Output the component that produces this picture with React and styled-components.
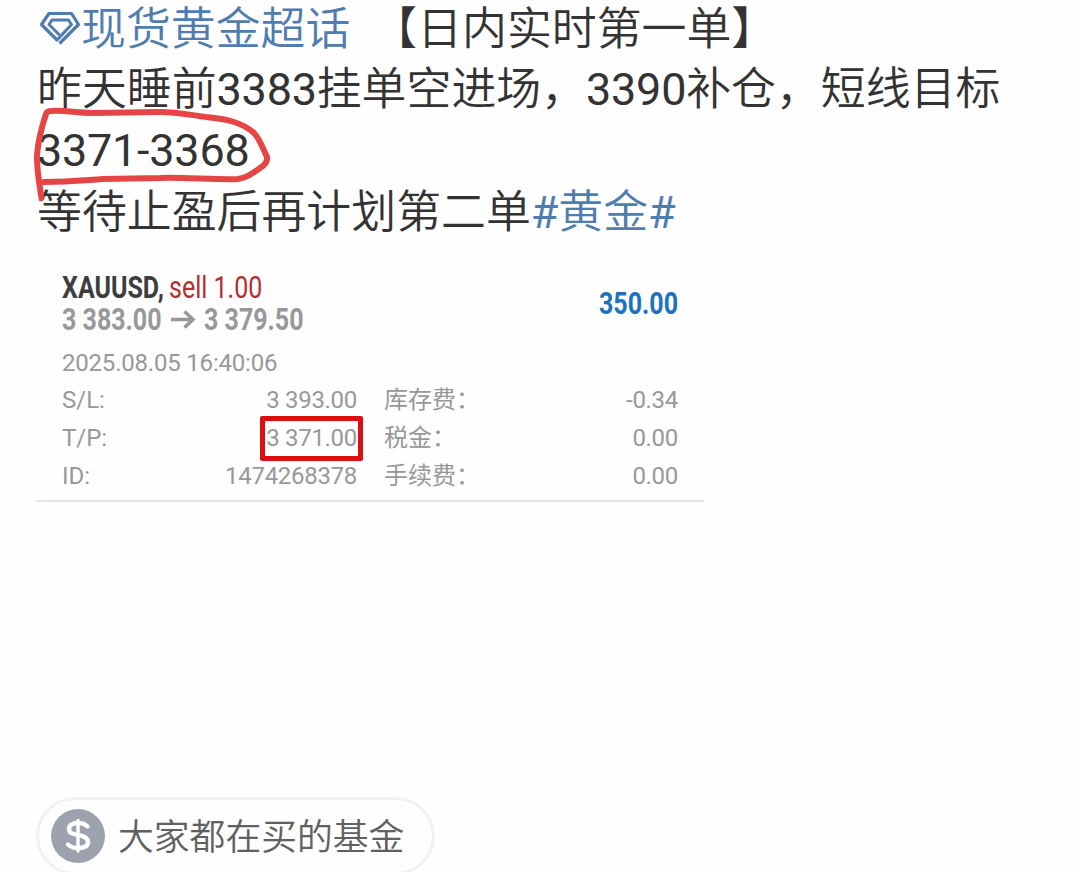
import React from 'react'
import styled, { createGlobalStyle } from 'styled-components'

const GlobalStyle = createGlobalStyle`
  body {
    margin: 0;
    background: #fefefe;
    overflow: hidden;
  }
`

const Page = styled.main`
  display: flex;
  flex-direction: column;
  box-sizing: border-box;
  width: 1080px;
  height: 872px;
  padding-left: 36px;
  overflow: hidden;
  font-family: Roboto, "Noto Sans CJK SC", sans-serif;
`

const Post = styled.div`
  position: relative;
  flex-shrink: 0;
  height: 264px;
  padding-left: 1px;
  box-sizing: border-box;
  color: #333;
  font-size: 44.9px;
  font-weight: 350;
`

const Line = styled.p`
  height: 61.3px;
  margin: 0;
  line-height: 61.3px;
  white-space: pre;
  &:first-child {
    height: 59px;
    line-height: 59px;
  }
`

const Num = styled.span`
  font-weight: 400;
  letter-spacing: -0.2px;
`

const Topic = styled.a`
  color: #507daf;
`

const Diamond = styled.svg`
  width: 44px;
  height: 45px;
  vertical-align: -6px;
`

const Scribble = styled.svg`
  position: absolute;
  left: -6px;
  top: 100px;
  width: 250px;
  height: 110px;
`

const Order = styled.section`
  flex-shrink: 0;
  box-sizing: border-box;
  width: 668px;
  height: 238px;
  padding: 8px 26px 0;
  border-bottom: 2px solid #e8e4e5;
  color: #98989a;
`

const OrderHead = styled.div`
  display: flex;
  justify-content: space-between;
  align-items: center;
  height: 64px;
`

const HeadLine = styled.div`
  display: flex;
  align-items: center;
  height: 32px;
`

const Condensed = styled.span`
  display: block;
  width: ${({ $width }) => $width}px;
  font-size: 30.5px;
  line-height: 32px;
  font-weight: ${({ $weight }) => $weight || 700};
  color: ${({ $color }) => $color};
  white-space: pre;
  transform: scaleX(0.82);
  transform-origin: left;
`

const Arrow = styled.svg`
  width: 26px;
  height: 24px;
  margin: 0 8px;
`

const OrderTime = styled.div`
  height: 45px;
  padding-top: 5px;
  box-sizing: border-box;
  font-size: 24px;
  line-height: 45px;
  letter-spacing: -0.2px;
`

const Details = styled.div`
  display: grid;
  grid-template-columns: 295px 294px;
  grid-auto-rows: 38px;
  column-gap: 27px;
`

const Detail = styled.div`
  display: flex;
  justify-content: space-between;
  font-size: 24px;
  line-height: 38px;
`

const Value = styled.span`
  position: relative;
  letter-spacing: -0.3px;
`

const Mark = styled.i`
  position: absolute;
  left: -6px;
  right: -6px;
  top: -3px;
  bottom: -4px;
  border: 5px solid #da0f12;
  border-radius: 2px;
`

const FundChip = styled.button`
  display: flex;
  align-items: center;
  flex-shrink: 0;
  box-sizing: border-box;
  width: 399px;
  height: 78px;
  margin-top: 295px;
  padding: 0 0 0 12px;
  border: 3px solid #f1f1f1;
  border-radius: 39px;
  background: #fefefe;
  color: #606060;
  font-family: inherit;
  font-size: 35.8px;
  font-weight: 350;
  line-height: 42px;
`

const FundLabel = styled.span`
  padding-top: 3px;
`

const Coin = styled.svg`
  width: 54px;
  height: 54px;
  margin-right: 13px;
`

const details = [
  { label: 'S/L:', value: '3 393.00' },
  { label: '库存费：', value: '-0.34' },
  { label: 'T/P:', value: '3 371.00', marked: true },
  { label: '税金：', value: '0.00' },
  { label: 'ID:', value: '1474268378' },
  { label: '手续费：', value: '0.00' },
]

const OrderCard = () => (
  <Order>
    <OrderHead>
      <div>
        <HeadLine>
          <Condensed $width={107} $color="#3d3d40">XAUUSD,</Condensed>
          <Condensed $width={92} $weight={400} $color="#b52e30">sell 1.00</Condensed>
        </HeadLine>
        <HeadLine>
          <Condensed $width={100}>3 383.00</Condensed>
          <Arrow viewBox="0 0 26 24" fill="none" stroke="#98989a" strokeWidth="3.5">
            <path d="M1 11.5H24M14.5 3.5L23 11.5L14.5 19.5" />
          </Arrow>
          <Condensed $width={100}>3 379.50</Condensed>
        </HeadLine>
      </div>
      <Condensed $width={79} $color="#1c72bd">350.00</Condensed>
    </OrderHead>
    <OrderTime>2025.08.05 16:40:06</OrderTime>
    <Details>
      {details.map(({ label, value, marked }) => (
        <Detail key={label}>
          <span>{label}</span>
          <Value>
            {value}
            {marked && <Mark />}
          </Value>
        </Detail>
      ))}
    </Details>
  </Order>
)

const App = () => (
  <Page>
    <GlobalStyle />
    <Post>
      <Line>
        <Topic>
          <Diamond viewBox="0 0 44 45" fill="none" stroke="#507daf" strokeWidth="3.2" strokeLinejoin="round">
            <path d="M28.5 25L20 34L4.5 18.5L12 7.5H34.5L41.5 18.5L22.5 37.5" />
            <path d="M27.5 26L34.5 18.5L31.5 14H15L12 18.5L22.5 29" strokeWidth="3" />
          </Diamond>
          现货黄金超话
        </Topic>
        {'  【日内实时第一单】'}
      </Line>
      <Line>
        昨天睡前<Num>3383</Num>挂单空进场，<Num>3390</Num>补仓，短线目标
      </Line>
      <Line>
        <Num>3371-3368</Num>
      </Line>
      <Line>
        等待止盈后再计划第二单<Topic><Num>#</Num>黄金<Num>#</Num></Topic>
      </Line>
      <Scribble viewBox="30 100 250 110" fill="none" stroke="#e64545" strokeWidth="6" strokeLinecap="round" strokeLinejoin="round">
        <path d="M41.5 198C39 182 36.5 168 37 155C38 142 42 126 46 114Q47 111 51 111C65 110 76 113 92 113L160 112C177 112 190 115 206 117C228 119 243 123 254 133C260 139 263 149 267 157Q268 163 260 168C253 173 248 177 238 179C220 180 180 177 160 178L103 179C86 180 72 182 44 182" />
      </Scribble>
    </Post>
    <OrderCard />
    <FundChip>
      <Coin viewBox="0 0 54 54" fill="none">
        <circle cx="27" cy="27" r="27" fill="#9da2af" />
        <path d="M36.5 17.5C34 15 31 14 27 14C21.5 14 18 16.5 18 20C18 24 21.5 25 27 26C33 27 37 28.5 37 33C37 37.5 33 39 27 39C22.5 39 19.5 38 17 35.5" stroke="#fff" strokeWidth="4.4" strokeLinecap="round" />
        <path d="M27 11.5V42" stroke="#fff" strokeWidth="3.4" strokeLinecap="round" />
      </Coin>
      <FundLabel>大家都在买的基金</FundLabel>
    </FundChip>
  </Page>
)

export default App
